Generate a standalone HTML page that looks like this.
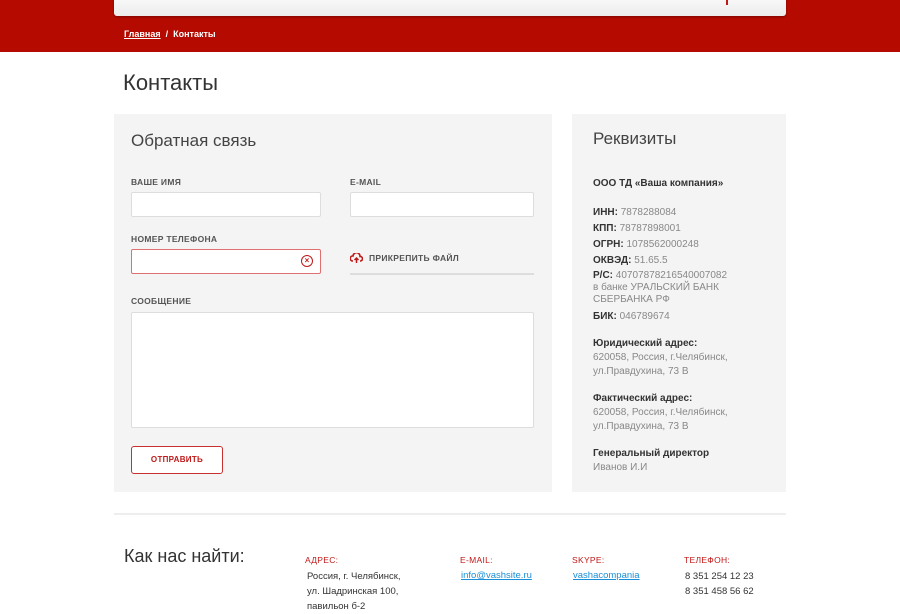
<!DOCTYPE html>
<html><head><meta charset="utf-8"><style>
body{margin:0;width:900px;height:600px;overflow:hidden;background:#fff;font-family:"Liberation Sans",sans-serif;position:relative}
.a{position:absolute}
.red{left:0;top:0;width:900px;height:52px;background:#b40a00}
.nav{left:114px;top:-4px;width:672px;height:20px;background:linear-gradient(#fafafa,#ececec);border-radius:0 0 3px 3px;box-shadow:0 1px 2px rgba(0,0,0,.3)}
.lab{font-size:8.5px;color:#444;letter-spacing:.3px;font-weight:bold;color:#555}
.inp{background:#fff;border:1px solid #ddd;border-radius:2px;box-sizing:border-box}
.pan{background:#f4f4f4}
.r{font-size:10px;color:#888;line-height:16px}
.r b{color:#333}
.fh{font-size:8.5px;color:#c01818;letter-spacing:.3px}
.ft{font-size:9.5px;color:#333;line-height:15px}
.lk{color:#1a8fd8;text-decoration:underline;font-size:9.5px}
</style></head><body>
<div class="a red"></div>
<div class="a nav"></div>
<div class="a" style="left:726px;top:0;width:2px;height:5px;background:#c01818"></div>
<div class="a" style="left:124px;top:29px;font-size:9px;color:#fff;font-weight:bold"><span style="text-decoration:underline">Главная</span> &nbsp;/&nbsp; Контакты</div>
<div class="a" style="left:123px;top:70px;font-size:22px;color:#333">Контакты</div>
<div class="a pan" style="left:114px;top:114px;width:438px;height:378px"></div>
<div class="a pan" style="left:572px;top:114px;width:214px;height:378px"></div>
<div class="a" style="left:131px;top:131px;font-size:17px;color:#444">Обратная связь</div>
<div class="a lab" style="left:131px;top:177px">ВАШЕ ИМЯ</div>
<div class="a lab" style="left:350px;top:177px">E-MAIL</div>
<div class="a inp" style="left:131px;top:192px;width:190px;height:25px"></div>
<div class="a inp" style="left:350px;top:192px;width:184px;height:25px"></div>
<div class="a lab" style="left:131px;top:234px">НОМЕР ТЕЛЕФОНА</div>
<div class="a inp" style="left:131px;top:249px;width:190px;height:25px;border-color:#e07070"></div>
<div class="a" style="left:301px;top:255px;width:10px;height:10px;border:1.5px solid #c01818;border-radius:50%;font-size:8px;color:#c01818;text-align:center;line-height:10px;font-weight:bold">×</div>
<svg class="a" style="left:350px;top:253px" width="13" height="10" viewBox="0 0 13 10"><path d="M3 8H2.5A2.5 2.5 0 0 1 3 3a3.5 3.5 0 0 1 7 0.5A2.2 2.2 0 0 1 10.5 8H10" fill="none" stroke="#c01818" stroke-width="1.6"/><path d="M6.5 10V5M4.5 7l2-2 2 2" fill="none" stroke="#c01818" stroke-width="1.5"/></svg>
<div class="a lab" style="left:369px;top:253px">ПРИКРЕПИТЬ ФАЙЛ</div>
<div class="a" style="left:350px;top:273px;width:184px;height:2px;background:#ddd"></div>
<div class="a lab" style="left:131px;top:296px">СООБЩЕНИЕ</div>
<div class="a inp" style="left:131px;top:312px;width:403px;height:116px"></div>
<div class="a" style="left:131px;top:446px;width:92px;height:28px;box-sizing:border-box;border:1px solid #c83030;border-radius:3px;background:#fff;font-size:8px;font-weight:bold;color:#c01818;text-align:center;line-height:26px;letter-spacing:.3px">ОТПРАВИТЬ</div>
<div class="a" style="left:593px;top:129px;font-size:17px;color:#444">Реквизиты</div>
<div class="a r" style="left:593px;top:176px;width:190px">
<b>ООО ТД «Ваша компания»</b><div style="height:13px"></div>
<b>ИНН:</b> 7878288084<br><b>КПП:</b> 78787898001<br><b>ОГРН:</b> 1078562000248<br><b>ОКВЭД:</b> 51.65.5<br>
<div style="line-height:12px;margin:1px 0 3px"><b>Р/С:</b> 40707878216540007082<br>в банке УРАЛЬСКИЙ БАНК<br>СБЕРБАНКА РФ</div>
<b>БИК:</b> 046789674
<div style="line-height:14px;margin-top:12px"><b>Юридический адрес:</b><br>620058, Россия, г.Челябинск,<br>ул.Правдухина, 73 В</div>
<div style="line-height:14px;margin-top:13px"><b>Фактический адрес:</b><br>620058, Россия, г.Челябинск,<br>ул.Правдухина, 73 В</div>
<div style="line-height:14px;margin-top:13px"><b>Генеральный директор</b><br>Иванов И.И</div>
</div>
<div class="a" style="left:114px;top:513px;width:672px;height:2px;background:#eee"></div>
<div class="a" style="left:124px;top:546px;font-size:18px;color:#333">Как нас найти:</div>
<div class="a fh" style="left:305px;top:555px">АДРЕС:</div>
<div class="a ft" style="left:307px;top:569px">Россия, г. Челябинск,<br>ул. Шадринская 100,<br>павильон б-2</div>
<div class="a fh" style="left:460px;top:555px">E-MAIL:</div>
<div class="a lk" style="left:461px;top:570px">info@vashsite.ru</div>
<div class="a fh" style="left:572px;top:555px">SKYPE:</div>
<div class="a lk" style="left:573px;top:570px">vashacompania</div>
<div class="a fh" style="left:684px;top:555px">ТЕЛЕФОН:</div>
<div class="a ft" style="left:685px;top:569px">8 351 254 12 23<br>8 351 458 56 62</div>
</body></html>
